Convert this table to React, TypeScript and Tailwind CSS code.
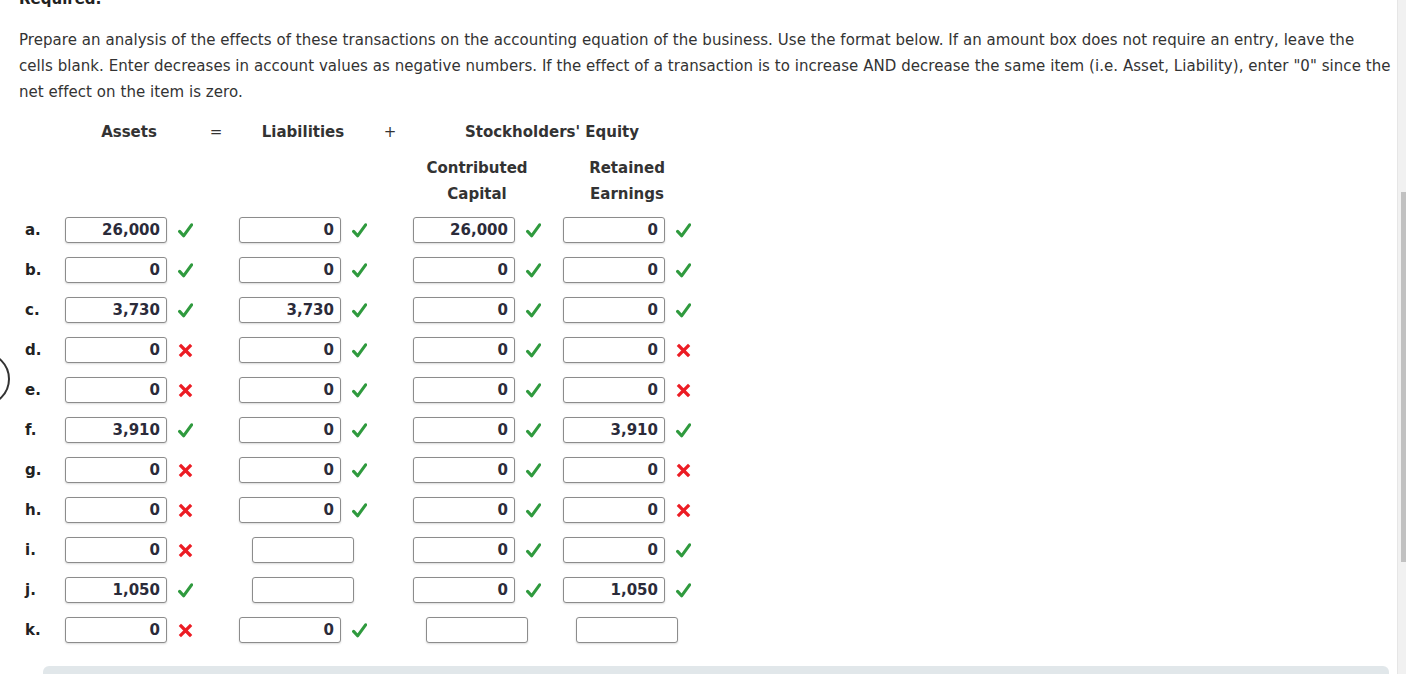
type Mark = "ok" | "no" | null;
type Cell = { value: string; mark: Mark } | null;

const ROWS: { label: string; cells: Cell[] }[] = [
  { label: "a.", cells: [{ value: "26,000", mark: "ok" }, { value: "0", mark: "ok" }, { value: "26,000", mark: "ok" }, { value: "0", mark: "ok" }] },
  { label: "b.", cells: [{ value: "0", mark: "ok" }, { value: "0", mark: "ok" }, { value: "0", mark: "ok" }, { value: "0", mark: "ok" }] },
  { label: "c.", cells: [{ value: "3,730", mark: "ok" }, { value: "3,730", mark: "ok" }, { value: "0", mark: "ok" }, { value: "0", mark: "ok" }] },
  { label: "d.", cells: [{ value: "0", mark: "no" }, { value: "0", mark: "ok" }, { value: "0", mark: "ok" }, { value: "0", mark: "no" }] },
  { label: "e.", cells: [{ value: "0", mark: "no" }, { value: "0", mark: "ok" }, { value: "0", mark: "ok" }, { value: "0", mark: "no" }] },
  { label: "f.", cells: [{ value: "3,910", mark: "ok" }, { value: "0", mark: "ok" }, { value: "0", mark: "ok" }, { value: "3,910", mark: "ok" }] },
  { label: "g.", cells: [{ value: "0", mark: "no" }, { value: "0", mark: "ok" }, { value: "0", mark: "ok" }, { value: "0", mark: "no" }] },
  { label: "h.", cells: [{ value: "0", mark: "no" }, { value: "0", mark: "ok" }, { value: "0", mark: "ok" }, { value: "0", mark: "no" }] },
  { label: "i.", cells: [{ value: "0", mark: "no" }, null, { value: "0", mark: "ok" }, { value: "0", mark: "ok" }] },
  { label: "j.", cells: [{ value: "1,050", mark: "ok" }, null, { value: "0", mark: "ok" }, { value: "1,050", mark: "ok" }] },
  { label: "k.", cells: [{ value: "0", mark: "no" }, { value: "0", mark: "ok" }, null, null] },
];

const GRID = "grid grid-cols-[46px_128px_46px_128px_46px_128px_22px_128px]";

function Check() {
  return (
    <svg width="15" height="15" viewBox="0 0 15 15" className="shrink-0">
      <path d="M1.6 8.4 L5.6 12.8 L13.6 1.8" fill="none" stroke="#2f9a3e" strokeWidth="3.1" strokeLinecap="round" strokeLinejoin="round" />
    </svg>
  );
}

function Cross() {
  return (
    <svg width="15" height="15" viewBox="0 0 15 15" className="shrink-0">
      <path d="M3 3 L12 12 M12 3 L3 12" fill="none" stroke="#ec1c24" strokeWidth="3.2" strokeLinecap="square" />
    </svg>
  );
}

function AmountBox({ cell }: { cell: Cell }) {
  return (
    <div className="flex h-[40px] items-center justify-center gap-[11px]">
      <div className="flex h-[26px] w-[102px] items-center justify-end rounded-[3px] border border-[#8c8c8c] bg-white pr-[6px] font-bold text-[#2b2b3a] shadow-[0_1px_2px_rgba(0,0,0,0.15)]">
        {cell?.value}
      </div>
      {cell?.mark === "ok" && <Check />}
      {cell?.mark === "no" && <Cross />}
    </div>
  );
}

export default function App() {
  return (
    <div className="relative flex h-[674px] w-[1406px] overflow-hidden bg-white font-['DejaVu_Sans',Verdana,sans-serif] text-[15px] leading-[26px] text-[#333]">
      <div className="absolute left-[-44px] top-[352px] h-[54px] w-[54px] rounded-full border-2 border-[#333]" />

      <div className="flex flex-1 flex-col pl-[19px]">
        <div className="-mt-[14px] font-bold text-[#222]">Required:</div>
        <p className="mt-[15px] tracking-[0.05px]">
          Prepare an analysis of the effects of these transactions on the accounting equation of the business. Use the format below. If an amount box does not require an entry, leave the
          <br />
          cells blank. Enter decreases in account values as negative numbers. If the effect of a transaction is to increase AND decrease the same item (i.e. Asset, Liability), enter "0" since the
          <br />
          net effect on the item is zero.
        </p>

        <div className="mt-[14px] flex flex-col">
          <div className={`${GRID} text-center`}>
            <div />
            <div className="font-bold">Assets</div>
            <div>=</div>
            <div className="font-bold">Liabilities</div>
            <div>+</div>
            <div className="col-span-3 font-bold">Stockholders' Equity</div>
          </div>
          <div className={`${GRID} mt-[10px] text-center font-bold`}>
            <div className="col-span-5" />
            <div>
              Contributed
              <br />
              Capital
            </div>
            <div />
            <div>
              Retained
              <br />
              Earnings
            </div>
          </div>

          <div className="mt-[3px] flex flex-col">
            {ROWS.map((row) => (
              <div key={row.label} className={GRID}>
                <div className="flex items-center pl-[6px] font-bold text-[#222]">{row.label}</div>
                <AmountBox cell={row.cells[0]} />
                <div />
                <AmountBox cell={row.cells[1]} />
                <div />
                <AmountBox cell={row.cells[2]} />
                <div />
                <AmountBox cell={row.cells[3]} />
              </div>
            ))}
          </div>
        </div>

        <div className="ml-[24px] mr-[8px] mt-[16px] h-[20px] rounded-t-[6px] bg-[#e1e7ea]" />
      </div>

      <div className="flex w-[9px] shrink-0 flex-col border-l border-[#e6e6e6] bg-[#f1f1f1] pl-[3px]">
        <div className="mt-[192px] h-[370px] w-[5px] bg-[#c1c1c1]" />
      </div>
    </div>
  );
}
